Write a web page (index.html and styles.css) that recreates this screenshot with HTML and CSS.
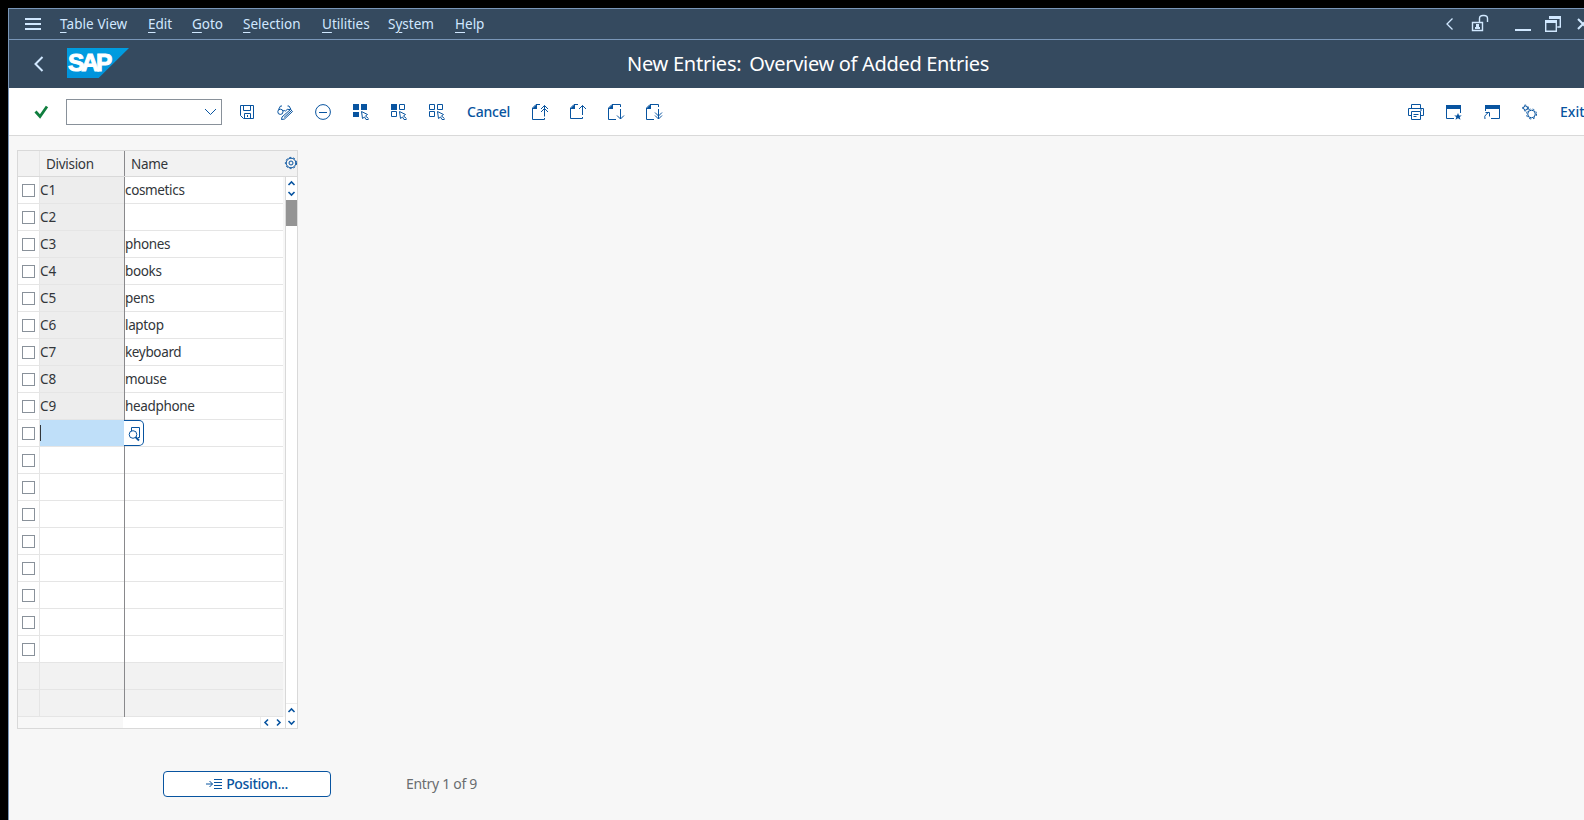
FILE: index.html
```html
<!DOCTYPE html>
<html lang="en">
<head>
<meta charset="utf-8">
<title>New Entries: Overview of Added Entries</title>
<link rel="stylesheet" href="styles.css">
</head>
<body>
<div class="window">
  <nav class="menubar">
    <svg class="burger" width="16" height="12"><path d="M0 1h16M0 6h16M0 11h16"/></svg>
    <span class="menu m-table"><u>T</u>able View</span>
    <span class="menu m-edit"><u>E</u>dit</span>
    <span class="menu m-goto"><u>G</u>oto</span>
    <span class="menu m-selection"><u>S</u>election</span>
    <span class="menu m-utilities"><u>U</u>tilities</span>
    <span class="menu m-system">S<u>y</u>stem</span>
    <span class="menu m-help"><u>H</u>elp</span>
    <svg class="wincontrols" width="138" height="30" viewBox="1446 9 138 30">
      <path d="M1452.500 18.500l-5.500 5.500 5.500 5.500"/>
      <path d="M1472.500 22.500h10v8h-10zM1479.500 22v-3.500q0-3 3.500-3h1q3.500 0 3.500 3V22" stroke-width="1.400"/>
      <path class="solid" d="M1476 24h3v3h1v2h-5v-2h1zM1515 29h16v2h-16zM1545 20h12v3h-12zM1549 16h12v3h-12z"/>
      <path d="M1545.700 20v11.300h10.600V20M1560.300 17v10h-3" stroke-width="1.400"/>
      <path d="M1578 19l10 10M1588 19l-10 10" stroke-width="2"/>
    </svg>
  </nav>
  <header class="titlebar">
    <svg class="back" width="10" height="16"><path d="M8.500 1L1.500 8l7 7"/></svg>
    <div class="logo"><span>SAP</span></div>
    <h1><span class="lead">New Entries:</span> Overview of Added Entries</h1>
  </header>
  <div class="toolbar">
    <svg class="check" width="15" height="14"><path d="M1.500 6.500l4.500 5L13 1.500"/></svg>
    <div class="command"><svg width="13" height="8"><path d="M1 1l5.500 5.500L12 1"/></svg></div>
    <div class="icons">
      <svg viewBox="0 0 16 16"><path d="M1.500 1.500h13v13h-10l-3-3zM4.500 1.500v5h7v-5M5.500 14.500v-5h6v5M8.500 11v2"/></svg>
      <svg viewBox="0 0 16 16"><circle cx="3.400" cy="7.800" r="2.600"/><path d="M1.500 5.500L3.500 2h1.500M6 7q1-1 2.500 0M8.500 7q1-2.500 5-1.500M10.500 2h1.500l2 3.500M5 13l8.500-7.500 2 2L7.500 15 4.500 15.500zM7 13.500L14 7"/></svg>
      <svg viewBox="0 0 16 16"><circle cx="8" cy="8" r="7.400"/><path d="M4 8.500h8"/></svg>
      <svg viewBox="0 0 16 16"><path class="solid" d="M0 0h6v6H0zM8 0h6v6H8zM0 8h6v5H0z"/><path d="M8.500 7.500l6 3-2 1.500 3 2.500M8.500 7.500l1 7 2-1.500 1.500 2.500h2.500"/></svg>
      <svg viewBox="0 0 16 16"><path class="solid" d="M0 0h6v6H0z"/><path d="M8.500.5h5v5h-5zM.5 7.500h5v5h-5zM8.500 7.500l6 3-2 1.500 3 2.500M8.500 7.500l1 7 2-1.500 1.500 2.500h2.500"/></svg>
      <svg viewBox="0 0 16 16"><path d="M.5.5h5v5h-5zM8.500.5h5v5h-5zM.5 7.500h5v5h-5zM8.500 7.500l6 3-2 1.500 3 2.500M8.500 7.500l1 7 2-1.500 1.500 2.500h2.500"/></svg>
    </div>
    <span class="cancel">Cancel</span>
    <div class="icons">
      <svg viewBox="0 0 16 16"><path class="solid" d="M5 0v5H0z"/><path d="M8 .5H4L.5 4v11.500h12V14M12.500 12.500V1.500M9 5l3.500-3.500L16 5M9 8l3.500-3.500L16 8"/></svg>
      <svg viewBox="0 0 16 16"><path class="solid" d="M5 0v5H0z"/><path d="M8 .5H4L.5 4v10.500h12V13M12.500 11V1.500M9 5l3.500-3.500L16 5"/></svg>
      <svg viewBox="0 0 16 16"><path class="solid" d="M5 0v5H0z"/><path d="M8 15.500H.5V4L4 .5h8.500V3M12.500 5v10M9 11.500l3.500 3.500 3.500-3.500"/></svg>
      <svg viewBox="0 0 16 16"><path class="solid" d="M5 0v5H0z"/><path d="M8 15.500H.5V4L4 .5h8.500V3M12.500 5v10M9 11.500l3.500 3.500 3.500-3.500M9 8.500l3.500 3.500L16 8.500"/></svg>
    </div>
    <div class="icons right">
      <svg viewBox="0 0 16 16"><path d="M3.500 4.500v-4h9v4M3.500 11.500h-3v-7h15v7h-3M3.500 7.500h9v8h-9zM5.500 10.500h5M5.500 12.500h3M12 6h2"/></svg>
      <svg viewBox="0 0 16 16"><path class="solid" d="M0 1h15v4H0zM12 9l1.100 2.500h2.700l-2.100 1.600.8 2.600-2.500-1.500-2.500 1.500.8-2.600-2.100-1.600h2.700z"/><path d="M.5 4v10.500H8M14.500 4v5"/></svg>
      <svg viewBox="0 0 16 16"><path class="solid" d="M1 1h15v4H1z"/><path d="M1.500 4v3M15.500 4v10.500H7M1 15q-1-3 1-4.500L5 8M1.500 8.500h4v4"/></svg>
      <svg viewBox="0 0 16 16"><circle cx="3.500" cy="4" r="2"/><circle class="teeth" cx="3.500" cy="4" r="2.900"/><circle cx="9.500" cy="10" r="3.800"/><circle class="teeth" cx="9.500" cy="10" r="5"/></svg>
    </div>
    <span class="exit">Exit</span>
  </div>
  <main>
    <div class="grid">
      <div class="head"><span class="sel"></span><span class="div">Division</span><span class="name">Name</span>
        <svg class="gear" width="12" height="12" viewBox="0 0 12 12"><circle cx="6" cy="6" r="4.800"/><circle class="teeth" cx="6" cy="6" r="5.600"/><circle cx="6" cy="6" r="2"/></svg>
      </div>
      <div class="body">
        <div class="rows">
          <div class="row"><span class="sel"><i></i></span><span class="div filled">C1</span><span class="name">cosmetics</span></div>
          <div class="row"><span class="sel"><i></i></span><span class="div filled">C2</span><span class="name"></span></div>
          <div class="row"><span class="sel"><i></i></span><span class="div filled">C3</span><span class="name">phones</span></div>
          <div class="row"><span class="sel"><i></i></span><span class="div filled">C4</span><span class="name">books</span></div>
          <div class="row"><span class="sel"><i></i></span><span class="div filled">C5</span><span class="name">pens</span></div>
          <div class="row"><span class="sel"><i></i></span><span class="div filled">C6</span><span class="name">laptop</span></div>
          <div class="row"><span class="sel"><i></i></span><span class="div filled">C7</span><span class="name">keyboard</span></div>
          <div class="row"><span class="sel"><i></i></span><span class="div filled">C8</span><span class="name">mouse</span></div>
          <div class="row"><span class="sel"><i></i></span><span class="div filled">C9</span><span class="name">headphone</span></div>
          <div class="row"><span class="sel"><i></i></span><span class="div active"><b class="caret"></b></span><span class="name"></span>
            <span class="lookup"><svg width="13" height="14"><path d="M3.500 4V.5h8v10H10"/><circle cx="5" cy="7.500" r="3.800"/><path d="M7.500 10l3.500 3.500" stroke-width="2"/></svg></span>
          </div>
          <div class="row"><span class="sel"><i></i></span><span class="div"></span><span class="name"></span></div>
          <div class="row"><span class="sel"><i></i></span><span class="div"></span><span class="name"></span></div>
          <div class="row"><span class="sel"><i></i></span><span class="div"></span><span class="name"></span></div>
          <div class="row"><span class="sel"><i></i></span><span class="div"></span><span class="name"></span></div>
          <div class="row"><span class="sel"><i></i></span><span class="div"></span><span class="name"></span></div>
          <div class="row"><span class="sel"><i></i></span><span class="div"></span><span class="name"></span></div>
          <div class="row"><span class="sel"><i></i></span><span class="div"></span><span class="name"></span></div>
          <div class="row"><span class="sel"><i></i></span><span class="div"></span><span class="name"></span></div>
          <div class="row off"><span class="sel"></span><span class="div"></span><span class="name"></span></div>
          <div class="row off"><span class="sel"></span><span class="div"></span><span class="name"></span></div>
          <div class="hscroll"><div class="track"></div>
            <div class="arrows"><svg width="5" height="7"><path d="M4 .5l-3 3 3 3"/></svg><svg width="5" height="7"><path d="M1 .5l3 3-3 3"/></svg></div>
          </div>
        </div>
        <div class="vscroll">
          <svg width="7" height="5"><path d="M.5 4l3-3 3 3"/></svg>
          <svg width="7" height="5"><path d="M.5 1l3 3 3-3"/></svg>
          <div class="thumb"></div>
          <div class="bottom">
            <svg width="7" height="5"><path d="M.5 4l3-3 3 3"/></svg>
            <svg width="7" height="5"><path d="M.5 1l3 3 3-3"/></svg>
          </div>
        </div>
      </div>
    </div>
    <div class="footer">
      <div class="position"><svg width="16" height="10"><path d="M0 5h6.500M3.500 2l3 3-3 3M8 .5h8M8 3.500h8M8 6.500h8M8 9.500h8"/></svg><span>Position...</span></div>
      <span class="entry">Entry 1 of 9</span>
    </div>
  </main>
</div>
</body>
</html>
```
FILE: styles.css
```css
* { box-sizing: border-box; }
body { margin: 0; padding: 8px 0 0 8px; width: 1584px; height: 820px; overflow: hidden; background: #000; font: 14px/18px "Noto Sans", "Open Sans", sans-serif; color: #32363a; }
svg { display: block; flex: none; fill: none; stroke: #0854a0; overflow: visible; }
svg .solid { fill: #0854a0; stroke: none; }
.window { height: 812px; border: 1px solid #7996b8; border-width: 1px 0 0 1px; background: #f7f7f7; overflow: hidden; }
.menubar { display: flex; align-items: center; height: 31px; padding-left: 16px; background: #354a5f; border-bottom: 1px solid #7996b8; color: #d1e8ff; }
.menubar svg { stroke: #d1e8ff; }
.menubar .solid { fill: #d1e8ff; }
.burger { margin-right: 19px; stroke-width: 2; }
.menu { flex: none; white-space: nowrap; font-size: 13.500px; padding-bottom: 1px; }
.menu u { text-underline-offset: 3px; }
.m-table { width: 88px; letter-spacing: 0.080px; }
.m-edit { width: 44px; }
.m-goto { width: 51px; }
.m-selection { width: 79px; }
.m-utilities { width: 66px; }
.m-system { width: 67px; }
.wincontrols { margin-left: auto; stroke-width: 1.300; }
.titlebar { display: flex; align-items: center; height: 48px; background: #354a5f; padding-left: 25px; }
.back { stroke: #d1e8ff; stroke-width: 2; }
.logo { flex: none; width: 62px; height: 30px; margin: 0 0 2px 23px; background: linear-gradient(#009de0, #0093dc); clip-path: polygon(0 0, 100% 0, 51% 100%, 0 100%); color: #fff; font: 900 24.500px/29px "Liberation Sans", sans-serif; letter-spacing: -3px; }
.logo span { display: block; padding-left: 1px; -webkit-text-stroke: 1px #fff; }
h1 { flex: none; margin: 0 0 0 498px; font-size: 20px; line-height: 28px; font-weight: 400; color: #fff; white-space: nowrap; letter-spacing: -0.320px; }
.lead { margin-right: 3px; letter-spacing: -0.250px; }
.toolbar { display: flex; align-items: center; height: 48px; background: #fff; border-bottom: 1px solid #d9d9d9; padding-left: 25px; color: #0854a0; }
.check { stroke: #107e3e; stroke-width: 2.800; }
.command { display: flex; flex: none; align-items: center; justify-content: flex-end; width: 156px; height: 26px; margin: 0 17px; padding-right: 4px; border: 1px solid #89919a; }
.icons { display: flex; gap: 22px; flex: none; }
.icons svg { width: 16px; height: 16px; }
.icons .teeth, .gear .teeth { stroke-dasharray: 2 2; }
.cancel { flex: none; width: 43px; margin: 0 22px; white-space: nowrap; font-weight: 500; letter-spacing: -0.200px; }
.right { margin-left: auto; }
.exit { flex: none; width: 24px; margin-left: 22px; white-space: nowrap; font-weight: 500; }
.grid { width: 281px; height: 579px; margin: 14px 0 0 8px; border: 1px solid #d9d9d9; }
.head, .row { display: flex; position: relative; }
.head { height: 26px; background: #f2f2f2; border-bottom: 1px solid #d9d9d9; line-height: 27px; font-size: 13.500px; letter-spacing: -0.300px; }
.sel { flex: none; width: 22px; border-right: 1px solid #e5e5e5; padding: 7px 0 0 4px; }
.sel i { display: block; width: 13px; height: 13px; background: #fff; border: 1px solid #89919a; }
.div { flex: none; width: 85px; border-right: 1px solid #89898c; }
.head .div, .head .name { padding-left: 6px; }
.name { flex: none; width: 158px; white-space: nowrap; }
.gear { margin: 6px 0 0 2px; }
.body { display: flex; height: 551px; }
.rows { width: 267px; }
.row { width: 265px; height: 27px; background: #fff; line-height: 26px; font-size: 13.500px; }
.row .name { letter-spacing: -0.350px; }
.row .sel, .row .name { box-shadow: inset 0 -1px #e5e5e5; }
.row .div { box-shadow: inset 0 -1px #e5e5e5; }
.row .filled { background: #ededed; }
.row .active { background: #bfdff9; }
.caret { display: block; width: 1px; height: 16px; margin: 5px 0 0; background: #32363a; }
.off { background: #f2f2f2; }
.lookup { position: absolute; z-index: 1; left: 106px; top: 0; width: 20px; height: 26px; padding: 6px 0 0 4px; background: #fff; border: 1px solid #0854a0; border-left: 0; border-radius: 0 5px 5px 0; }
.hscroll { display: flex; height: 11px; width: 267px; background: #fff; }
.track { width: 105px; background: #f7f7f7; }
.arrows { display: flex; gap: 7px; width: 25px; margin-left: auto; padding: 2px 0 0 3px; border-left: 1px solid #ededed; }
.arrows svg, .vscroll svg { stroke-width: 1.600; }
.vscroll { display: flex; flex-direction: column; align-items: center; width: 12px; border-left: 1px solid #d9d9d9; background: #fff; padding-top: 4px; gap: 5px; }
.thumb { width: 11px; height: 26px; margin-top: -1px; background: #949494; }
.bottom { display: flex; flex-direction: column; align-items: center; gap: 7px; width: 11px; height: 25px; margin-top: auto; padding-top: 4px; border-top: 1px solid #ededed; }
.footer { display: flex; align-items: center; margin: 42px 0 0 154px; }
.position { display: flex; align-items: center; justify-content: center; gap: 4px; width: 168px; height: 26px; background: #fff; border: 1px solid #0854a0; border-radius: 4px; color: #0854a0; font-weight: 500; letter-spacing: -0.350px; }
.entry { margin-left: 75px; color: #6a6d70; letter-spacing: -0.300px; }
```
